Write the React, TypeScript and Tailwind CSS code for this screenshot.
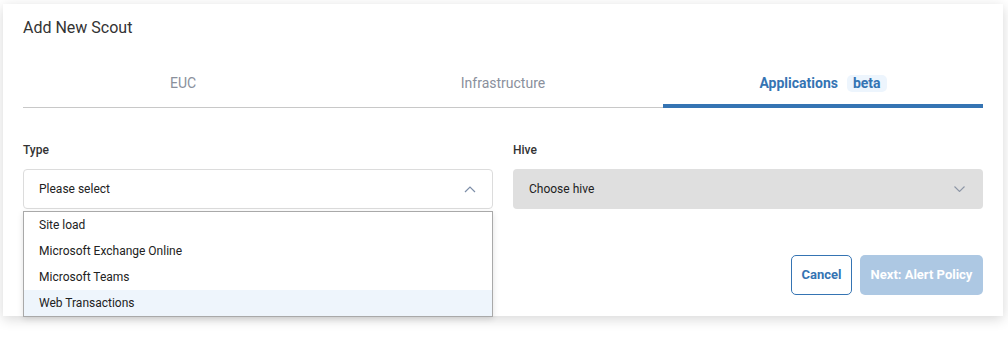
import React from "react";

function ChevronUp() {
  return (
    <svg width="12" height="7" viewBox="0 0 12 7" fill="none">
      <polyline points="1,6 6,1 11,6" stroke="#7d8ea8" strokeWidth="1.2" />
    </svg>
  );
}

function ChevronDown() {
  return (
    <svg width="11" height="6" viewBox="0 0 11 6" fill="none">
      <polyline points="0.5,0.5 5.5,5.5 10.5,0.5" stroke="#8d96a6" strokeWidth="1.1" />
    </svg>
  );
}

export default function App() {
  const items = ["Site load", "Microsoft Exchange Online", "Microsoft Teams", "Web Transactions"];
  return (
    <div
      className="w-[1008px] h-[356px] bg-white"
      style={{ fontFamily: "Roboto, 'Liberation Sans', sans-serif" }}
    >
      <div className="ml-[3px] pt-[4px]">
        <div className="relative w-[1000px] h-[312px] bg-white shadow-[0_3px_12px_rgba(0,0,0,0.16)] px-5 pt-3">
          <div className="text-[16px] leading-6 text-[#333333]">Add New Scout</div>

          <div className="mt-[19px] flex border-b border-[#c8c8c8]">
            <div className="flex-1 h-12 flex items-center justify-center text-[14px] text-[#8a909c]">EUC</div>
            <div className="flex-1 h-12 flex items-center justify-center text-[14px] text-[#8a909c]">Infrastructure</div>
            <div className="flex-1 h-[49px] -mb-px pt-[3px] border-b-4 border-[#3574b3] flex items-center justify-center gap-[9px] text-[14px]">
              <span className="font-bold text-[#3574b3]">Applications</span>
              <span className="bg-[#edf5fd] rounded-[5px] px-[6px] h-[17px] leading-[17px] font-bold text-[#3574b3] text-[14px]">beta</span>
            </div>
          </div>

          <div className="mt-[34px] grid grid-cols-2 gap-5">
            <div>
              <div className="text-[12px] leading-4 font-medium text-[#333333] mb-[11px]">Type</div>
              <div className="relative">
                <div className="h-10 border border-[#dcdcdc] rounded-[4px] flex items-center justify-between pl-[15px] pr-[16px] text-[12px] text-[#222222]">
                  <span>Please select</span>
                  <ChevronUp />
                </div>
                <div className="absolute left-0 top-[42px] w-full bg-white border border-[#a9a9a9] shadow-[0_2px_6px_rgba(0,0,0,0.12)] z-10">
                  {items.map((it, i) => (
                    <div
                      key={it}
                      className={
                        "h-[26px] flex items-center pl-[15px] text-[12px] text-[#222222] " +
                        (i === 3 ? "bg-[#eef5fc]" : "")
                      }
                    >
                      {it}
                    </div>
                  ))}
                </div>
              </div>
            </div>
            <div>
              <div className="text-[12px] leading-4 font-medium text-[#333333] mb-[11px]">Hive</div>
              <div className="h-10 bg-[#dfdfdf] rounded-[4px] flex items-center justify-between pl-4 pr-[18px] text-[12px] text-[#222222]">
                <span>Choose hive</span>
                <ChevronDown />
              </div>
            </div>
          </div>

          <div className="mt-[46px] flex justify-end gap-2">
            <button className="h-10 w-[61px] border border-[#3574b3] rounded-[5px] text-[13px] font-bold text-[#3574b3] bg-white">
              Cancel
            </button>
            <button className="h-10 w-[123px] rounded-[5px] text-[13px] font-bold text-white bg-[#adc8e3]">
              Next: Alert Policy
            </button>
          </div>
        </div>
      </div>
    </div>
  );
}
